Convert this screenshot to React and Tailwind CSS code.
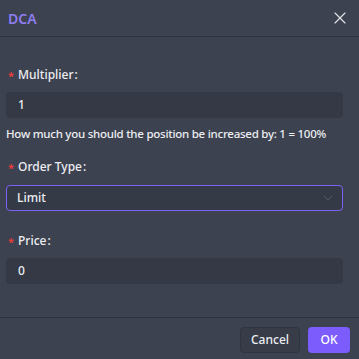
import { ChevronDown, X } from "lucide-react"

const Label = ({ children, className = "" }) => (
  <div className={`flex items-center h-[18px] text-[12px] font-medium text-[#eceef2] ${className}`}>
    <span className="text-[#ff3b3b] mr-[4px] text-[11px] leading-none">*</span>
    <span>{children}</span>
    <span className="ml-[1px]">:</span>
  </div>
)

const App = () => {
  return (
    <div className="w-[359px] h-[359px] bg-[#3d4250] flex flex-col font-['Noto_Sans',sans-serif] overflow-hidden">
      <div className="h-[37px] flex items-center justify-between pl-[8px] pr-[9px] border-b border-[#2e323c] shrink-0">
        <span className="text-[14px] font-semibold text-[#8d7df0]">DCA</span>
        <X size={20} strokeWidth={1.4} className="text-[#dfe2e6]" />
      </div>

      <div className="flex-1 px-[6px] pt-[29px]">
        <Label className="pl-[2px]">Multiplier</Label>
        <div className="mt-[8px] h-[26px] mr-[10px] rounded-[4px] bg-[#343945] flex items-center px-[12px] text-[12px] font-medium text-[#eceef2]">
          1
        </div>
        <div className="mt-[8px] h-[16px] flex items-center text-[11.5px] font-medium tracking-[-0.25px] text-[#eceef2] whitespace-nowrap">
          How much you should the position be increased by: 1 = 100%
        </div>

        <Label className="pl-[2px] mt-[16px]">Order Type</Label>
        <div className="mt-[9px] h-[26px] mr-[10px] rounded-[4px] bg-[#353a47] border-[1.5px] border-[#7d63f5] flex items-center justify-between pl-[10px] pr-[6px] text-[12px] font-medium text-[#eceef2]">
          <span>Limit</span>
          <ChevronDown size={16} strokeWidth={1.4} className="text-[#585d6a]" />
        </div>

        <Label className="pl-[2px] mt-[21px]">Price</Label>
        <div className="mt-[8px] h-[26px] mr-[10px] rounded-[4px] bg-[#343945] flex items-center px-[12px] text-[12px] font-medium text-[#eceef2]">
          0
        </div>
      </div>

      <div className="h-[42px] border-t border-[#2e323c] flex items-start justify-end gap-[8px] pt-[9px] pr-[9px] shrink-0">
        <button className="h-[26px] w-[60px] rounded-[4px] bg-[#373c48] border border-[#30343e] text-[12px] font-medium text-[#eceef2]">
          Cancel
        </button>
        <button className="h-[26px] w-[42px] rounded-[4px] bg-[#7c5cfc] text-[12px] font-medium text-white">
          OK
        </button>
      </div>
    </div>
  )
}

export default App
